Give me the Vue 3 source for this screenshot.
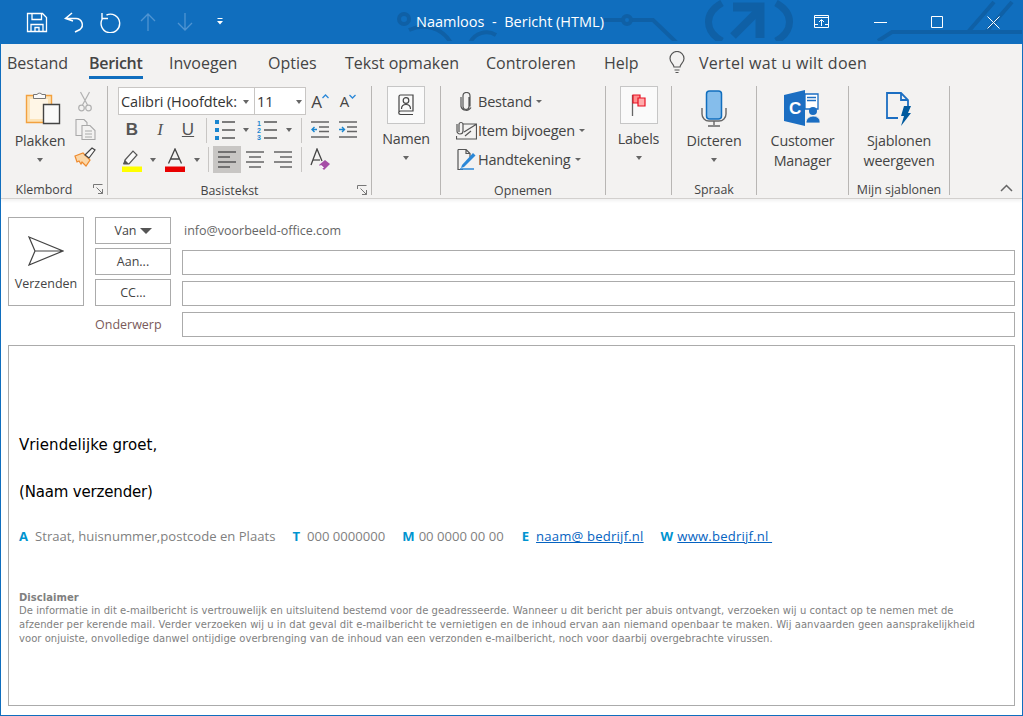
<script setup>
const lines = [
  'De informatie in dit e-mailbericht is vertrouwelijk en uitsluitend bestemd voor de geadresseerde. Wanneer u dit bericht per abuis ontvangt, verzoeken wij u contact op te nemen met de',
  'afzender per kerende mail. Verder verzoeken wij u in dat geval dit e-mailbericht te vernietigen en de inhoud ervan aan niemand openbaar te maken. Wij aanvaarden geen aansprakelijkheid',
  'voor onjuiste, onvolledige danwel ontijdige overbrenging van de inhoud van een verzonden e-mailbericht, noch voor daarbij overgebrachte virussen.'
]
</script>

<template>
  <div class="win">
    <header class="title">
      <svg class="pattern" width="1023" height="41" viewBox="0 0 1023 41" fill="none" stroke="#0f60a6" stroke-width="4">
        <circle cx="404" cy="19" r="5" />
        <path d="M409 30a32 32 0 0 1 42 13M470 43a18 18 0 0 1 26-8" />
        <path d="M604 20h49l24 23" />
        <circle cx="627" cy="20" r="4" fill="#106ebe" />
        <path d="M722 3c-18 10-18 28 0 38M776 3c18 10 18 28 0 38" stroke-width="7" />
        <path d="M733 7h27v31" stroke-width="9" />
        <path d="M760 9l-27 27" stroke-width="8" />
        <path d="M878 41l14-9h130M968 32l26-30M986 32l26-30" />
      </svg>
      <div class="qat">
        <svg class="qi" viewBox="0 0 22 22" fill="none" stroke="#fff" stroke-width="1.3"><path d="M1.500 2.500h15l4 4v14h-19zM6 2.500v6h9.500v-6M5 20.500v-7h12v7M9 20.500v-4h4v4" /></svg>
        <svg class="qi" viewBox="0 0 22 22" fill="none" stroke="#fff" stroke-width="1.5"><path d="M9 2L2.500 7.500L10 10M2.500 7.500H13a6.200 6.200 0 0 1 4 11L12 21" /></svg>
        <svg class="qi" viewBox="0 0 22 22" fill="none" stroke="#fff" stroke-width="1.4"><path d="M6.500 4a9.300 9.300 0 1 1-4 3.500M2 2v5.500h6" /></svg>
        <svg class="qi dim" viewBox="0 0 22 22" fill="none" stroke="#4f94d2" stroke-width="1.3"><path d="M11 20V3M4 10l7-7l7 7" /></svg>
        <svg class="qi dim" viewBox="0 0 22 22" fill="none" stroke="#4f94d2" stroke-width="1.3"><path d="M11 2v17M4 12l7 7l7-7" /></svg>
        <svg class="qc" viewBox="0 0 6 7"><path d="M.5 0h5v1h-5zM0 3h6L3 6.500z" fill="#fff" /></svg>
      </div>
      <div class="doc-title">Naamloos&nbsp; - &nbsp;Bericht (HTML)</div>
      <div class="ctl">
        <svg width="16" height="14" viewBox="0 0 16 14" fill="none" stroke="#fff"><path d="M.5 .5h14v12H.5zM.5 2.500h14M7.500 11V5M5 7l2.500-2.500L10 7M4 9.500H1M14 9.500h-3" /></svg>
        <svg width="13" height="3" viewBox="0 0 13 3" stroke="#fff"><path d="M0 1.500h13" /></svg>
        <svg width="12" height="12" viewBox="0 0 12 12" fill="none" stroke="#fff"><path d="M.5 .5h11v11H.5z" /></svg>
        <svg width="13" height="13" viewBox="0 0 13 13" stroke="#fff" fill="none"><path d="M.5 .5l12 12M12.500 .5l-12 12" /></svg>
      </div>
    </header>

    <nav class="tabs">
      <span>Bestand</span>
      <span class="active">Bericht</span>
      <span>Invoegen</span>
      <span>Opties</span>
      <span>Tekst opmaken</span>
      <span>Controleren</span>
      <span>Help</span>
      <svg class="bulb" width="18" height="24" viewBox="0 0 18 24" fill="none" stroke="#555" stroke-width="1.200"><path d="M6 16c0-3-4-4-4-8.500a7 7 0 0 1 14 0C16 12 12 13 12 16zM6.500 19h5M7.500 21.500h3" /></svg>
      <span class="tell">Vertel wat u wilt doen</span>
    </nav>

    <section class="ribbon">
      <div class="group g1">
        <div class="gbody row-body">
          <div class="big w70">
            <div class="icon45 paste">
              <svg width="36" height="34" viewBox="0 0 36 34">
                <path d="M1.500 4.500h25v27h-25z" fill="#fde3b6" stroke="#f2a13f" stroke-width="1.400" />
                <path d="M5 8h18v20H5z" fill="#fff6e6" />
                <path d="M8.500 3.500h3.500a3 3 0 0 1 5 0h3.500v4h-12z" fill="#fafafa" stroke="#777" />
                <path d="M18.500 13.500h16v19h-16z" fill="#fafafa" stroke="#444" stroke-width="1.400" />
              </svg>
            </div>
            <div class="t">Plakken</div>
            <i class="caret" />
          </div>
          <div class="small-col">
            <svg width="14" height="21" viewBox="0 0 14 21" fill="none" stroke="#b1b1b1" stroke-width="1.200"><path d="M2.500 1l7 13M11.500 1l-7 13" /><circle cx="3.500" cy="17" r="2.800" /><circle cx="10.500" cy="17" r="2.800" /></svg>
            <svg width="21" height="21" viewBox="0 0 21 21" fill="#f3f2f1" stroke="#a9a9a9" stroke-width="1.100"><path d="M1 .5h8l3 3v13H1z" /><path d="M7 6.500h8l5 5v9H7z" /><path d="M10 12h7M10 15h7M10 18h7" /></svg>
            <svg width="22" height="20" viewBox="0 0 22 20"><path d="M1 9l8-3l7 7l-4 6l-4-4l-1 2l-2-3l-2 1z" fill="#fbd7a8" stroke="#ee8a2d" stroke-width="1.200" /><path d="M11 8l7-7l3 2l-6 8z" fill="#fafafa" stroke="#444" stroke-width="1.200" /></svg>
          </div>
        </div>
        <div class="glabel launch">Klembord
          <svg class="launcher" width="10" height="10" viewBox="0 0 10 10" fill="none" stroke="#777"><path d="M.5 4V.5h9M9.500 9.500L3.500 3.500M9.500 5v4.500H5" /></svg>
        </div>
      </div>

      <div class="group g2">
        <div class="gbody col-body">
          <div class="row r1">
            <div class="sel font">Calibri (Hoofdtek:<i class="caret sc" /></div>
            <div class="sel size">11<i class="caret sc2" /></div>
            <div class="cell w28 grow-a">A<svg width="7" height="5" viewBox="0 0 7 5" fill="none" stroke="#2b88d8" stroke-width="1.300"><path d="M.5 4l3-3l3 3" /></svg></div>
            <div class="cell w28 grow-a smaller">A<svg width="7" height="5" viewBox="0 0 7 5" fill="none" stroke="#2b88d8" stroke-width="1.300"><path d="M.5 1l3 3l3-3" /></svg></div>
          </div>
          <div class="row r2">
            <div class="cell w28 fmt b">B</div>
            <div class="cell w28 fmt it">I</div>
            <div class="cell w28 fmt u">U</div>
            <i class="sep s1" />
            <div class="cell w24">
              <svg width="20" height="20" viewBox="0 0 20 20"><path d="M0 0h4v4H0zM0 8h4v4H0zM0 16h4v4H0z" fill="#1a86d0" /><path d="M7 2h13M7 10h13M7 18h13" stroke="#555" stroke-width="1.500" /></svg>
            </div>
            <div class="cell w18"><i class="caret" /></div>
            <div class="cell w24">
              <svg width="20" height="20" viewBox="0 0 20 20"><text x="0" y="6" class="num">1</text><text x="0" y="13" class="num">2</text><text x="0" y="20" class="num">3</text><path d="M7 2h13M7 10h13M7 18h13" stroke="#555" stroke-width="1.500" /></svg>
            </div>
            <div class="cell w20"><i class="caret" /></div>
            <i class="sep s2" />
            <div class="cell w28">
              <svg width="18" height="18" viewBox="0 0 18 18" fill="none" stroke-width="1.400"><path d="M0 1h18M8 6h10M8 10.500h10M0 16h18" stroke="#666" /><path d="M6 8.500H1M3.500 6L1 8.500L3.500 11" stroke="#1a86d0" /></svg>
            </div>
            <div class="cell w28">
              <svg width="18" height="18" viewBox="0 0 18 18" fill="none" stroke-width="1.400"><path d="M0 1h18M8 6h10M8 10.500h10M0 16h18" stroke="#666" /><path d="M0 8.500h5M3 6l2.500 2.500L3 11" stroke="#1a86d0" /></svg>
            </div>
          </div>
          <div class="row r3">
            <div class="cell w28">
              <svg width="20" height="24" viewBox="0 0 20 24"><path d="M3 12l8-9l4 4l-8 9H2z" fill="#fafafa" stroke="#555" stroke-width="1.200" /><path d="M1 16l2-4l4 4z" fill="#555" /><path d="M0 18.500h20V24H0z" fill="#ff0" /></svg>
            </div>
            <div class="cell w14"><i class="caret" /></div>
            <div class="cell w30">
              <svg width="20" height="24" viewBox="0 0 20 24"><path d="M3.500 15.500L10 1l6.500 14.500M5.500 11h9" fill="none" stroke="#444" stroke-width="1.300" /><path d="M0 18.500h20V24H0z" fill="#e90000" /></svg>
            </div>
            <div class="cell w14"><i class="caret" /></div>
            <i class="sep s3" />
            <div class="cell alsel">
              <svg width="18" height="18" viewBox="0 0 18 18" stroke="#555" stroke-width="1.400"><path d="M0 1h18M0 6h12M0 11h18M0 16h12" /></svg>
            </div>
            <div class="cell w28">
              <svg width="18" height="18" viewBox="0 0 18 18" stroke="#666" stroke-width="1.400"><path d="M0 1h18M3 6h12M0 11h18M3 16h12" /></svg>
            </div>
            <div class="cell w28">
              <svg width="18" height="18" viewBox="0 0 18 18" stroke="#666" stroke-width="1.400"><path d="M0 1h18M6 6h12M0 11h18M6 16h12" /></svg>
            </div>
            <i class="sep s4" />
            <div class="cell w30">
              <svg width="20" height="23" viewBox="0 0 20 23"><path d="M1 17L7 1l5 12" fill="none" stroke="#444" stroke-width="1.300" /><path d="M3 12h7" stroke="#444" stroke-width="1.200" /><path d="M9 17l6-5l5 4l-6 6z" fill="#a64ca6" /><path d="M11 17l3 2.500l-1.500 1l-3-2.500z" fill="#fff" /></svg>
            </div>
          </div>
        </div>
        <div class="glabel launch">Basistekst
          <svg class="launcher" width="10" height="10" viewBox="0 0 10 10" fill="none" stroke="#777"><path d="M.5 4V.5h9M9.500 9.500L3.500 3.500M9.500 5v4.500H5" /></svg>
        </div>
      </div>

      <div class="group g3">
        <div class="gbody big">
          <div class="boxbtn">
            <svg width="16" height="22" viewBox="0 0 16 22" fill="none" stroke="#444" stroke-width="1.200"><path d="M1 18V2.500A1.500 1.500 0 0 1 2.500 1H15v16H2.500a1.700 1.700 0 0 0 0 3.500H15" /><circle cx="8" cy="6.500" r="2.800" /><path d="M3.500 15c0-6 9-6 9 0" /></svg>
          </div>
          <div class="t mt5">Namen</div>
          <i class="caret" />
        </div>
      </div>

      <div class="group g4">
        <div class="gbody list">
          <div class="li">
            <span class="li-i"><svg width="13" height="20" viewBox="0 0 13 20" fill="none" stroke="#555" stroke-width="1.200"><path d="M9 5v9.500a3 3 0 0 1-6 0V4a3.500 3.500 0 0 1 7 0v10.500" /><path d="M1 5v9.500a5.500 5.500 0 0 0 10 1" /></svg></span>Bestand<i class="caret mini" />
          </div>
          <div class="li">
            <span class="li-i"><svg width="21" height="19" viewBox="0 0 21 19" fill="none" stroke="#555" stroke-width="1.200"><path d="M7 3h13.500v15H.5v-3M20 3.500L8 11M9 15l6-5" /><path d="M3 11V3.500a2 2 0 0 1 4 0V10a3 3 0 0 1-6 0V3" /></svg></span>Item bijvoegen<i class="caret mini" />
          </div>
          <div class="li">
            <span class="li-i"><svg width="19" height="21" viewBox="0 0 19 21" fill="none"><path d="M1 .5h8l4 4v4M6 20.500H1V.5M9 .5v4h4" stroke="#555" stroke-width="1.200" /><path d="M5 16l11-12l2.500 2.500L7 18l-3 1z" fill="#2b88d8" /><path d="M3 20h14" stroke="#2b88d8" stroke-width="1.500" /></svg></span>Handtekening<i class="caret mini" />
          </div>
        </div>
        <div class="glabel">Opnemen</div>
      </div>

      <div class="group g5">
        <div class="gbody big">
          <div class="boxbtn">
            <svg width="16" height="22" viewBox="0 0 16 22"><path d="M1.500 1v21" stroke="#666" stroke-width="1.300" /><path d="M2 1h7v8H2z" fill="#ff8f8f" stroke="#e81123" stroke-width="1.200" /><path d="M7 4h7v8H7z" fill="#ffabab" stroke="#e81123" stroke-width="1.200" /></svg>
          </div>
          <div class="t mt5">Labels</div>
          <i class="caret" />
        </div>
      </div>

      <div class="group g6">
        <div class="gbody big">
          <div class="icon45 top4">
            <svg width="26" height="37" viewBox="0 0 26 37" fill="none"><path d="M1 18v6a7 7 0 0 0 7 7h10a7 7 0 0 0 7-7v-6M13 31v4M7 36h12" stroke="#666" stroke-width="1.400" /><rect x="5.500" y="1" width="15" height="28" rx="3" fill="#85bdeb" stroke="#106ebe" stroke-width="1.500" /></svg>
          </div>
          <div class="t">Dicteren</div>
          <i class="caret" />
        </div>
        <div class="glabel">Spraak</div>
      </div>

      <div class="group g7">
        <div class="gbody big">
          <div class="icon45 top4">
            <svg width="37" height="36" viewBox="0 0 37 36"><path d="M0 5L21 0v36L0 31z" fill="#1b6ec2" /><path d="M21 4h13v15H21z" fill="#fff" stroke="#1b6ec2" stroke-width="1.300" /><path d="M23 7.500h9M23 10.500h9" stroke="#1b6ec2" stroke-width="1.300" /><text x="5" y="24" class="ctext">C</text><circle cx="29" cy="21" r="4" fill="#1b6ec2" /><path d="M22 33c0-9 14-9 14-1v1z" fill="#1b6ec2" stroke="#f3f2f1" stroke-width=".8" /></svg>
          </div>
          <div class="t">Customer</div>
          <div class="t">Manager</div>
        </div>
      </div>

      <div class="group g8">
        <div class="gbody big">
          <div class="icon45 top6">
            <svg width="26" height="34" viewBox="0 0 26 34"><path d="M12 26H1V1h14l7 7v8M15 1v7h7" fill="none" stroke="#1b6ec2" stroke-width="1.800" /><path d="M18 14h7l-3 7h3l-10 13l3-10h-3z" fill="#005a9e" /></svg>
          </div>
          <div class="t">Sjablonen</div>
          <div class="t">weergeven</div>
        </div>
        <div class="glabel">Mijn sjablonen</div>
      </div>

      <svg class="collapse" width="13" height="8" viewBox="0 0 13 8" fill="none" stroke="#666" stroke-width="1.500"><path d="M1 7l5.500-5.500L12 7" /></svg>
    </section>

    <main class="content">
      <div class="head">
        <button class="send">
          <svg width="36" height="30" viewBox="0 0 36 30" fill="none" stroke="#444" stroke-width="1.200"><path d="M1 1l34 14L1 29l6-14zM7 15h28" /></svg>
          <span>Verzenden</span>
        </button>
        <div class="fields">
          <div class="frow">
            <button class="fbtn">Van<i class="vcaret" /></button>
            <span class="from">info@voorbeeld-office.com</span>
          </div>
          <div class="frow">
            <button class="fbtn">Aan...</button>
            <div class="inp" />
          </div>
          <div class="frow">
            <button class="fbtn">CC...</button>
            <div class="inp" />
          </div>
          <div class="frow last">
            <span class="lbl">Onderwerp</span>
            <div class="inp" />
          </div>
        </div>
      </div>
      <article class="body">
        <p class="greet">Vriendelijke groet,</p>
        <p class="name">(Naam verzender)</p>
        <div class="sig">
          <b>A</b><span class="addr">Straat, huisnummer,postcode en Plaats</span>
          <b class="t-k">T</b><span class="tel">000 0000000</span>
          <b class="m-k">M</b><span class="mob">00 0000 00 00</span>
          <b class="e-k">E</b><a class="mail">naam@ bedrijf.nl</a>
          <b class="w-k">W</b><a class="web">www.bedrijf.nl&nbsp;</a>
        </div>
        <div class="disc">
          <b>Disclaimer</b>
          <div v-for="l in lines" :key="l">{{ l }}</div>
        </div>
      </article>
    </main>
  </div>
</template>

<style scoped>
.win { width: 1023px; height: 716px; box-sizing: border-box; border: 1px solid #106ebe; border-top: 0; background: #fff; overflow: hidden; font-family: "Open Sans", "Noto Sans", sans-serif; color: #444; display: flex; flex-direction: column; }
.title { height: 44px; flex: none; background: #106ebe; position: relative; display: flex; align-items: center; color: #fff; margin: 0 -1px; }
.pattern { position: absolute; left: 0; top: 0; }
.qat { position: relative; display: flex; align-items: center; padding-left: 26px; height: 44px; }
.qi { width: 22px; height: 22px; margin-right: 15px; }
.qc { width: 6px; height: 7px; margin-left: 6px; margin-top: -2px; }
.doc-title { position: absolute; left: 416px; top: 12px; font-size: 14.500px; line-height: 20px; white-space: nowrap; }
.ctl { position: absolute; left: 814px; top: 15px; width: 186px; height: 14px; display: flex; justify-content: space-between; align-items: center; }
.tabs { height: 37px; flex: none; background: #f3f2f1; display: grid; grid-template-columns: 82px 80px 99px 77px 141px 118px 64px 31px 1fr; padding-left: 6px; align-items: start; font-size: 16px; line-height: 39px; }
.tabs span { white-space: nowrap; }
.tabs .active { font-weight: 600; justify-self: start; border-bottom: 3px solid #106ebe; height: 32px; letter-spacing: -.3px; padding-right: 1px; }
.tabs .tell { letter-spacing: .3px; }
.bulb { margin-top: 7px; }
.ribbon { height: 118px; flex: none; background: #f3f2f1; display: flex; align-items: flex-start; padding-top: 5px; box-sizing: border-box; border-bottom: 1px solid #d2d0ce; box-shadow: 0 2px 3px rgba(0,0,0,.06); position: relative; }
.group { height: 109px; border-right: 1px solid #b8b6b4; display: flex; flex-direction: column; flex: none; box-sizing: border-box; }
.g1 { width: 107px; } .g2 { width: 264px; } .g3 { width: 69px; } .g4 { width: 165px; } .g5 { width: 66px; } .g6 { width: 85px; } .g7 { width: 92px; } .g8 { width: 101px; }
.gbody { height: 95px; flex: none; }
.glabel { height: 14px; line-height: 17px; font-size: 12.400px; text-align: center; position: relative; white-space: nowrap; }
.launch { padding-right: 20px; }
.launcher { position: absolute; right: 4px; top: 3px; }
.collapse { position: absolute; right: 9px; top: 103px; }
.row-body { display: flex; padding-left: 4px; }
.big { display: flex; flex-direction: column; align-items: center; }
.w70 { width: 70px; }
.icon45 { height: 45px; flex: none; display: flex; align-items: flex-start; padding-top: 6px; box-sizing: border-box; }
.icon45.top4 { padding-top: 4px; }
.icon45.paste { margin-left: 6px; padding-top: 5px; }
.t { font-size: 14.300px; line-height: 20px; white-space: nowrap; letter-spacing: -.2px; }
.mt5 { margin-top: 5px; }
.caret { display: inline-block; width: 0; height: 0; border: 3.500px solid transparent; border-top: 4px solid #666; border-bottom: 0; }
.big > .caret { margin-top: 7px; }
.small-col { width: 20px; padding-top: 5px; display: flex; flex-direction: column; align-items: center; gap: 7px; }
.small-col svg { flex: none; }
.boxbtn { width: 38px; height: 38px; box-sizing: border-box; background: #fafafa; border: 1px solid #c6c6c6; display: flex; align-items: center; justify-content: center; }
.col-body { padding: 1px 0 0 10px; display: flex; flex-direction: column; }
.row { display: flex; align-items: center; }
.r1 { height: 28px; }
.r2 { height: 30px; }
.r3 { height: 29px; }
.cell { height: 27px; display: flex; align-items: center; justify-content: center; flex: none; }
.w14 { width: 14px; } .w18 { width: 18px; } .w20 { width: 20px; } .w24 { width: 24px; } .w28 { width: 28px; } .w30 { width: 30px; }
.sel { height: 28px; box-sizing: border-box; background: #fff; border: 1px solid #c8c6c4; display: flex; align-items: center; font-size: 14.500px; color: #333; position: relative; overflow: hidden; white-space: nowrap; padding-left: 2px; }
.font { width: 136px; border-right: 0; letter-spacing: -.1px; }
.size { width: 52px; }
.sc, .sc2 { position: absolute; top: 12px; }
.sc { right: 5px; box-shadow: -1px 0 0 3px #fff; }
.sc2 { right: 3px; }
.grow-a { font-size: 17px; }
.grow-a svg { margin: -10px 0 0 0; }
.smaller { font-size: 15px; }
.fmt { font-size: 17px; color: #555; }
.b { font-weight: 700; font-family: "Liberation Sans", sans-serif; }
.it { font-style: italic; font-family: "Liberation Serif", serif; }
.u { text-decoration: underline; font-family: "Liberation Sans", sans-serif; }
.num { font: 700 7px "Liberation Sans", sans-serif; fill: #1a86d0; }
.sep { width: 1px; flex: none; background: #c8c6c4; height: 25px; }
.s1 { margin: 0 6px 0 4px; }
.s2 { margin: 0 4px 0 2px; }
.s3 { margin: 0 4px; }
.s4 { margin: 0 3px 0 4px; }
.alsel { width: 28px; background: #c8c6c4; }
.list { padding: 1px 0 0 14px; }
.li { height: 29px; display: flex; align-items: center; font-size: 14.500px; white-space: nowrap; letter-spacing: -.2px; }
.li-i { width: 23px; flex: none; display: flex; justify-content: center; }
.mini { margin-left: 4px; border-width: 3px; border-top-width: 3.500px; border-bottom-width: 0; }
.ctext { font: 700 17px "Liberation Sans", sans-serif; fill: #fff; }
.content { flex: 1; display: flex; flex-direction: column; padding: 18px 7px 9px 7px; min-height: 0; }
.head { display: flex; height: 128px; flex: none; }
button { font-family: inherit; margin: 0; padding: 0; background: #fff; color: #444; border: 1px solid #ababab; }
.send { width: 76px; height: 89px; display: flex; flex-direction: column; align-items: center; box-sizing: border-box; padding-top: 18px; font-size: 12.500px; gap: 9px; }
.fields { flex: 1; margin-left: 11px; display: flex; flex-direction: column; gap: 4px; }
.frow { display: flex; align-items: center; height: 27px; }
.frow.last { height: 25px; margin-top: 2px; }
.fbtn { width: 76px; height: 27px; font-size: 12.500px; display: flex; align-items: center; justify-content: center; gap: 3px; box-sizing: border-box; flex: none; }
.vcaret { width: 0; height: 0; border: 6px solid transparent; border-top: 6px solid #555; border-bottom: 0; }
.from { font-size: 12.500px; margin-left: 13px; color: #666; }
.inp { flex: 1; margin-left: 11px; height: 25px; border: 1px solid #ababab; box-sizing: border-box; align-self: flex-end; }
.lbl { width: 76px; font-size: 12.500px; color: #7a5a5a; flex: none; }
.body { height: 361px; box-sizing: border-box; border: 1px solid #ababab; padding: 89px 0 0 10px; flex: none; color: #000; }
.greet, .name { margin: 0; font-family: "DejaVu Sans", sans-serif; font-size: 15px; line-height: 20px; }
.greet { letter-spacing: .06px; }
.name { margin-top: 27px; letter-spacing: -.17px; }
.sig { margin-top: 24px; display: flex; align-items: baseline; font-size: 13.100px; color: #7f7f7f; line-height: 20px; white-space: nowrap; }
.sig b { color: #0094d0; font-weight: 700; }
.addr { margin-left: 7px; }
.t-k { margin-left: 17px; } .tel { margin-left: 7px; }
.m-k { margin-left: 17px; } .mob { margin-left: 4px; }
.e-k { margin-left: 18px; } .mail { margin-left: 7px; }
.w-k { margin-left: 17px; } .web { margin-left: 4px; }
.sig a { color: #0563c1; text-decoration: underline; letter-spacing: .2px; }
.disc { margin-top: 45px; font-family: "DejaVu Sans", sans-serif; font-size: 10px; line-height: 14px; letter-spacing: .045px; color: #7f7f7f; white-space: nowrap; }
.disc b { display: block; line-height: 13px; }
</style>

<style>
html, body { margin: 0; background: #fff; }
</style>
